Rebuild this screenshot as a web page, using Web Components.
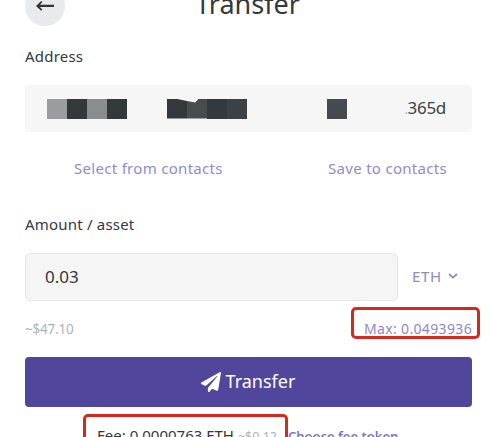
<!DOCTYPE html>
<html>
<head>
<meta charset="utf-8">
<title>Transfer</title>
<style>
  html, body { margin: 0; padding: 0; background: #fff; }
  body { height: 437px; overflow: hidden; font-family: "Noto Sans", "Open Sans", sans-serif; color: #33393d; }
</style>
</head>
<body>
<transfer-page></transfer-page>

<script>
// small helper, every element is the same shape: a style plus some markup
const define = (name, css, html) => {
  customElements.define(name, class extends HTMLElement {
    connectedCallback() {
      this.attachShadow({ mode: "open" });
      this.shadowRoot.innerHTML = `<style>${css}</style>${html}`;
    }
  });
};

define("top-bar", `
  :host { display: flex; align-items: center; height: 40px; margin-top: -14px; position: relative; }
  .back { width: 40px; height: 40px; border-radius: 50%; background: #e8eaec; display: flex; align-items: center; justify-content: center; flex: none; }
  .title { flex: 1; text-align: center; font-size: 27px; line-height: 40px; color: #33393d; margin-right: 42px; margin-top: -5px; }
`, `
  <div class="back">
    <svg width="18" height="10" viewBox="0 0 18 10"><path d="M5.2 0 L6.4 1.1 L4 3.7 H18 V6.1 H4 L6.4 8.7 L5.2 9.8 L0 4.9 Z" fill="#2f3539"/></svg>
  </div>
  <div class="title">Transfer</div>
`);

define("field-label", `
  :host { display: block; font-size: 15px; line-height: 20px; color: #33393d; letter-spacing: .2px; }
`, `<slot></slot>`);

define("address-box", `
  :host { display: flex; align-items: center; height: 47px; background: #f6f6f7; border-radius: 4px; padding: 0 26px 0 22px; margin-top: 19px; }
  .mosaic { display: flex; flex: 1; height: 20px; }
  .mosaic i { display: block; width: 20px; height: 20px; flex: none; }
  .gap { width: 40px !important; }
  .wide { width: 80px !important; }
  .end { font-size: 17px; color: #3c4246; line-height: 20px; letter-spacing: -.3px; }
  .dot { color: #a9adb0; font-size: 12px; }
`, `
  <div class="mosaic">
    <i style="background:#9b9c9e"></i><i style="background:#32383c"></i><i style="background:#8a8d8f"></i><i style="background:#32383c"></i>
    <i class="gap"></i>
    <i style="background:#32383c;clip-path:polygon(0 0,40% 0,100% 12%,100% 100%,0 100%)"></i>
    <i style="background:#464c50;clip-path:polygon(0 12%,40% 20%,60% 0,100% 0,100% 100%,0 100%)"></i>
    <i style="background:#33393d"></i><i style="background:#3c4145"></i>
    <i class="wide"></i>
    <i style="background:#464a4e"></i>
  </div>
  <div class="end"><span class="dot">.</span>365d</div>
`);

define("contact-links", `
  :host { display: flex; justify-content: space-between; padding: 0 25px 0 49px; margin-top: 26px; font-size: 15px; line-height: 20px; color: #918bcb; letter-spacing: .3px; }
`, `<span>Select from contacts</span><span>Save to contacts</span>`);

define("amount-row", `
  :host { display: flex; align-items: center; gap: 14px; margin-top: 19px; }
  .input { width: 373px; height: 48px; box-sizing: border-box; background: #f5f5f5; border: 1px solid #e6e6e7; border-radius: 5px; padding-left: 19px; font-size: 17px; line-height: 46px; color: #33393d; }
  .asset { display: flex; align-items: center; gap: 6px; font-size: 15px; line-height: 20px; margin-top: -2px; color: #8f8cb8; letter-spacing: .6px; }
`, `
  <div class="input">0.03</div>
  <div class="asset">ETH
    <svg width="10" height="6" viewBox="0 0 10 6"><path d="M1 1 L5 4.6 L9 1" fill="none" stroke="#8f8cb8" stroke-width="1.7"/></svg>
  </div>
`);

// red rectangle somebody drew over the screenshot, sits over the text
define("red-mark", `
  :host { display: inline-block; position: relative; }
  .ring { position: absolute; border: 3px solid #d4291f; border-radius: 5px; box-sizing: border-box;
          left: var(--l); right: var(--r); top: var(--t); bottom: var(--b); }
`, `<slot></slot><div class="ring"></div>`);

define("balance-row", `
  :host { display: flex; justify-content: space-between; margin-top: 18px; font-size: 14px; line-height: 20px; }
  .usd { color: #aab4bd; font-size: 13.5px; letter-spacing: -.2px; }
  .max { color: #8e88c8; letter-spacing: .35px; }
  red-mark { --l: -13px; --r: -8px; --t: -12px; --b: 0px; }
`, `
  <span class="usd">~$47.10</span>
  <red-mark><span class="max">Max: 0.0493936</span></red-mark>
`);

define("send-button", `
  :host { display: flex; align-items: center; justify-content: center; gap: 5px; height: 50px; margin-top: 18px; background: #50469b; border-radius: 4px; color: #fff; font-size: 18px; }
  svg { margin-left: -1px; }
  span { margin-top: -3px; }
`, `
  <svg width="20" height="20" viewBox="0 0 512 512"><path fill="#fff" d="M476 3.2L12.5 270.6c-18.1 10.4-15.8 35.6 2.2 43.2L121 358.4l287.3-253.2c5.5-4.9 13.3 2.6 8.6 8.3L176 407v80.5c0 23.6 28.5 32.9 42.5 15.8L282 426l124.6 52.2c14.2 6 30.4-2.9 33-18.2l72-432C515 7.8 493.3-6.8 476 3.2z"/></svg>
  <span>Transfer</span>
`);

define("fee-row", `
  :host { display: flex; align-items: baseline; padding-left: 72px; margin-top: 18px; font-size: 15px; line-height: 20px; white-space: nowrap; }
  .fee { color: #33393d; }
  .usd { color: #aab4bd; font-size: 12.5px; }
  .choose { color: #7d72cb; font-weight: 600; font-size: 13px; margin-left: 11px; }
  red-mark { --l: -14px; --r: -11px; --t: -11px; --b: -20px; }
`, `
  <red-mark><span class="fee">Fee: 0.0000763 ETH</span> <span class="usd">~$0.12</span></red-mark>
  <span class="choose">Choose fee token</span>
`);

define("transfer-page", `
  :host { display: block; height: 437px; overflow: hidden; box-sizing: border-box; padding: 0 23px 0 25px; }
  .first { margin-top: 20px; }
  .second { margin-top: 36px; }
`, `
  <top-bar></top-bar>
  <field-label class="first">Address</field-label>
  <address-box></address-box>
  <contact-links></contact-links>
  <field-label class="second">Amount / asset</field-label>
  <amount-row></amount-row>
  <balance-row></balance-row>
  <send-button></send-button>
  <fee-row></fee-row>
`);
</script>
</body>
</html>
